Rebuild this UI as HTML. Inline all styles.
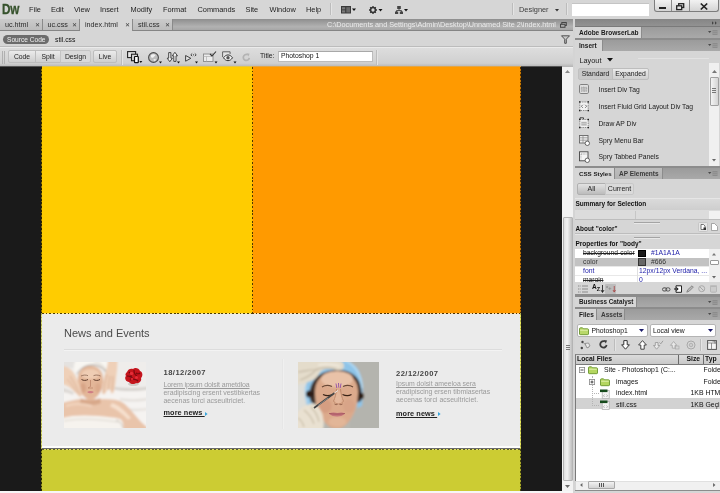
<!DOCTYPE html>
<html><head><meta charset="utf-8">
<style>
*{box-sizing:border-box;margin:0;padding:0}
html,body{width:720px;height:493px;overflow:hidden;background:#d6d6d6;font-family:"Liberation Sans",sans-serif;font-size:7px;color:#111}
.a{position:absolute}
.t{position:absolute;white-space:nowrap;line-height:1;font-size:7px}
.b{font-weight:bold}
svg{position:absolute;overflow:visible}
/* menu */
#menubar{left:0;top:0;width:720px;height:19px;background:#d6d6d6}
#menubar .m{font-size:7.400px;top:5.600px;color:#1c1c1c}
.sep{position:absolute;width:1px;background:#bcbcbc;border-right:1px solid #e4e4e4;width:2px}
/* doc tabs */
#tabbar{left:0;top:19px;width:573px;height:12px;background:linear-gradient(#8e8e8e,#b2b2b2 70%,#a6a6a6);border-bottom:1px solid #858585}
.tab{position:absolute;top:0;height:11px;background:linear-gradient(#cbcbcb,#bcbcbc);border-right:1px solid #8a8a8a;font-size:7.2px;line-height:12px;padding-left:5px;color:#2a2a2a;white-space:nowrap}
.tab.act{background:#d6d6d6;height:12px}
.tab i{position:absolute;right:2.500px;top:-.3px;font-style:normal;font-size:6.300px;color:#3a3a3a}
#relbar{left:0;top:31px;width:573px;height:16px;background:#d6d6d6;border-bottom:1px solid #bcbcbc}
#toolbar{left:0;top:47px;width:573px;height:20px;background:linear-gradient(#dddddd,#d0d0d0 80%,#b4b4b4);border-top:1px solid #ebebeb}
.btn{position:absolute;top:2.300px;height:12.700px;border:1px solid #bdbdbd;border-radius:2px;background:linear-gradient(#ebebeb,#cfcfcf);font-size:6.8px;line-height:11px;text-align:center;color:#222}
/* canvas */
#canvas{left:0;top:67px;width:562px;height:424px;background:#1a1a1a;overflow:hidden}
#vscroll{left:562px;top:67px;width:11px;height:424px;background:#f2f2f2}
.news{color:#9a9a9a;font-size:6.9px}
/* right */
#right{left:573px;top:19px;width:147px;height:474px;background:#d6d6d6;border-left:2px solid #8c8c8c;border-image:linear-gradient(90deg,#d4d4d4 0 40%,#858585 40% 100%) 1}
.ph{position:absolute;left:575px;width:145px;height:11px;background:linear-gradient(#9b9b9b,#a9a9a9)}
.pt{position:absolute;top:0;left:0;height:11px;background:#d6d6d6;font-weight:bold;font-size:6.500px;line-height:11px;padding-left:4px;border-right:1px solid #8c8c8c;color:#1c1c1c;white-space:nowrap}
.pt.in{background:linear-gradient(#bdbdbd,#b2b2b2);color:#3a3a3a}
.pm{position:absolute;right:2px;top:3px;width:10px;height:6px}
.dl{position:absolute;left:575px;width:145px;height:2px;background:#8c8c8c}
.row{font-size:6.75px;color:#1a1a1a}
</style></head><body><div id="root" style="position:absolute;left:0;top:0;width:720px;height:493px;will-change:transform">

<div id="menubar" class="a">
 <div class="t b" style="left:2.300px;top:.6px;font-size:15px;color:#36522c;-webkit-text-stroke:.35px #36522c;transform:scaleX(.78);transform-origin:0 0;letter-spacing:-.3px">Dw</div>
 <div class="t m" style="left:29px">File</div>
 <div class="t m" style="left:51px">Edit</div>
 <div class="t m" style="left:74px">View</div>
 <div class="t m" style="left:100px">Insert</div>
 <div class="t m" style="left:130.5px">Modify</div>
 <div class="t m" style="left:163px">Format</div>
 <div class="t m" style="left:197.5px">Commands</div>
 <div class="t m" style="left:245.500px">Site</div>
 <div class="t m" style="left:269.500px">Window</div>
 <div class="t m" style="left:306px">Help</div>
 <div class="sep" style="left:330px;top:3px;height:12px"></div>
 <!-- layout icon -->
 <svg style="left:341px;top:6px" width="16" height="8" viewBox="0 0 16 8"><rect x="0" y="0" width="10" height="7.5" fill="#3a3a3a"/><rect x="1" y="1.2" width="3.2" height="2.2" fill="#7a7a7a"/><rect x="1" y="4.3" width="3.2" height="2.2" fill="#7a7a7a"/><rect x="5.3" y="1.2" width="3.7" height="5.3" fill="#6a6a6a"/><path d="M11 2.5h4l-2 2.6z" fill="#111"/></svg>
 <!-- gear -->
 <svg style="left:368.5px;top:5.5px" width="16" height="9" viewBox="0 0 16 9"><circle cx="4" cy="4" r="2.4" fill="none" stroke="#333" stroke-width="1.5"/><g stroke="#333" stroke-width="1.3"><path d="M4 0v1.4M4 6.6V8M0 4h1.4M6.600 4H8M1.200 1.200l1 1M5.800 5.800l1 1M1.200 6.800l1-1M5.800 2.200l1-1"/></g><path d="M9.500 3h4l-2 2.600z" fill="#111"/></svg>
 <!-- site -->
 <svg style="left:395px;top:5.500px" width="16" height="9" viewBox="0 0 16 9"><rect x="2.200" y="0" width="3.600" height="3" fill="#444"/><path d="M4 3v1.500M1.500 6V4.500h5V6" stroke="#444" stroke-width=".9" fill="none"/><rect x="0" y="5.500" width="3.200" height="2.500" fill="#444"/><rect x="4.800" y="5.500" width="3.200" height="2.500" fill="#444"/><path d="M9 3h4l-2 2.600z" fill="#111"/></svg>
 <div class="sep" style="left:512px;top:3px;height:12px"></div>
 <div class="t m" style="left:519px;color:#3c3c3c">Designer</div>
 <svg style="left:555px;top:9px" width="4" height="3" viewBox="0 0 4 3"><path d="M0 0h4L2 2.500z" fill="#333"/></svg>
 <div class="sep" style="left:566px;top:3px;height:12px"></div>
 <div class="a" style="left:572px;top:3px;width:77px;height:12.500px;background:#fff;border-top:1px solid #c4c4c4"></div>
 <!-- window buttons -->
 <div class="a" style="left:654px;top:0;width:65px;height:12px;border:1px solid #7d7d7d;border-top:none;border-radius:0 0 3px 3px;background:linear-gradient(#f2f2f2,#d4d4d4)"></div>
 <div class="a" style="left:671px;top:0;width:1px;height:11px;background:#8a8a8a"></div>
 <div class="a" style="left:689px;top:0;width:1px;height:11px;background:#8a8a8a"></div>
 <div class="a" style="left:659px;top:7px;width:7px;height:2px;background:#222"></div>
 <svg style="left:676px;top:2.500px" width="9" height="8" viewBox="0 0 9 8"><rect x="2.700" y=".7" width="5" height="3.800" fill="none" stroke="#222" stroke-width="1.300"/><rect x=".7" y="2.800" width="5" height="3.800" fill="#e4e4e4" stroke="#222" stroke-width="1.300"/></svg>
 <svg style="left:700px;top:2.500px" width="8" height="7" viewBox="0 0 8 7"><path d="M.8.500l6.400 6M7.200.500l-6.400 6" stroke="#222" stroke-width="1.700"/></svg>
</div>

<div id="tabbar" class="a">
 <div class="tab" style="left:0;width:43px">uc.html<i>✕</i></div>
 <div class="tab" style="left:43px;width:37px;padding-left:4.500px">uc.css<i>✕</i></div>
 <div class="tab act" style="left:80px;width:53px">index.html<i>✕</i></div>
 <div class="tab" style="left:133px;width:40px">stil.css<i>✕</i></div>
 <div class="t" style="left:327px;top:2px;font-size:7.270px;color:#ececec">C:\Documents and Settings\Admin\Desktop\Unnamed Site 2\index.html</div>
 <svg style="left:560px;top:3px" width="7" height="6" viewBox="0 0 7 6"><rect x="1.800" y=".5" width="4.500" height="3" fill="none" stroke="#444" stroke-width="1"/><rect x=".5" y="2.300" width="4.500" height="3" fill="#aaa" stroke="#444" stroke-width="1"/></svg>
</div>

<div id="relbar" class="a">
 <div class="a" style="left:3px;top:4px;width:46px;height:9px;border-radius:5px;background:#6c6c6c"></div>
 <div class="t" style="left:7px;top:5.700px;font-size:6.600px;color:#f0f0f0">Source Code</div>
 <div class="t" style="left:55px;top:5.800px;font-size:6.800px;color:#111">stil.css</div>
 <!-- funnel -->
 <svg style="left:561px;top:4px" width="9" height="9" viewBox="0 0 9 9"><path d="M.5.800h8L5.300 4.200V8.300H3.700V4.200z" fill="#c8c8c8" stroke="#444" stroke-width=".9"/></svg>
</div>
<div id="toolbar" class="a">
 <div class="a" style="left:2px;top:3px;width:1px;height:13px;background:#b0b0b0"></div>
 <div class="a" style="left:4px;top:3px;width:1px;height:13px;background:#b0b0b0"></div>
 <div class="btn" style="left:8px;width:28px;border-radius:2px 0 0 2px">Code</div>
 <div class="btn" style="left:35px;width:26px;border-radius:0">Split</div>
 <div class="btn" style="left:60px;width:31px;background:#d9d9d9;border-radius:0 2px 2px 0;border-color:#c4c4c4">Design</div>
 <div class="btn" style="left:93px;width:24px">Live</div>
 <div class="sep" style="left:121px;top:2px;height:15px"></div>
 <!-- multiscreen -->
 <svg style="left:127px;top:3px" width="16" height="13" viewBox="0 0 16 13"><rect x=".6" y=".6" width="8" height="6" fill="#e8e8e8" stroke="#222" stroke-width="1.100"/><rect x="4.500" y="3.200" width="6" height="6.500" fill="#d8d8d8" stroke="#222" stroke-width="1.100"/><rect x="7.500" y="5.500" width="3.800" height="6.200" rx=".6" fill="#fff" stroke="#111" stroke-width="1.200"/><path d="M12.300 10h3l-1.500 2z" fill="#111"/></svg>
 <!-- globe -->
 <svg style="left:148px;top:3.500px" width="14" height="12" viewBox="0 0 14 12"><circle cx="5.500" cy="5.500" r="4.900" fill="#bdbdbd" stroke="#4a4a4a" stroke-width="1.100"/><path d="M3 3.200c1.500-1.500 3.500-1 4.500-.2-.5 1.300-1.500 1.200-2 2.300-.5 1-1.800.5-2.500-.4z" fill="#f2f2f2"/><path d="M5.500 7.200c1-.5 2.300-.3 2.500.6-.3 1-1.300 1.500-2 1.400z" fill="#e8e8e8"/><path d="M11 9.500h3l-1.500 2z" fill="#111"/></svg>
 <!-- file transfer arrows -->
 <svg style="left:167px;top:4px" width="13" height="12" viewBox="0 0 13 12"><path d="M1.700.600h2.200v5.600h1.500L2.800 9.700.2 6.200h1.500z" fill="#f4f4f4" stroke="#333" stroke-width=".9"/><path d="M6.800 9.400H9V3.800h1.500L7.900.3 5.300 3.800h1.500z" fill="#f4f4f4" stroke="#333" stroke-width=".9"/><path d="M10 9.400h3l-1.500 2z" fill="#111"/></svg>
 <!-- live code -->
 <svg style="left:185px;top:4px" width="14" height="12" viewBox="0 0 14 12"><path d="M.6 3.500l5.200 2.800L.6 9.200z" fill="#e2e2e2" stroke="#333" stroke-width=".9"/><path d="M7.200 1.500L5.800 2.800l1.400 1.300M9.800 1.500l1.400 1.300-1.400 1.300" stroke="#333" stroke-width=".9" fill="none"/><circle cx="8.500" cy="2.800" r=".6" fill="#333"/><path d="M10 9.400h3l-1.500 2z" fill="#111"/></svg>
 <!-- check browser -->
 <svg style="left:203px;top:3px" width="15" height="13" viewBox="0 0 15 13"><rect x=".5" y="3" width="9.500" height="7.500" fill="#ececec" stroke="#8a8a8a" stroke-width=".9"/><path d="M.5 5.500h9.500M3.500 5.500v5" stroke="#b0b0b0" stroke-width=".7"/><path d="M7 3l2 2 4-4.500" stroke="#333" stroke-width="1.100" fill="none"/><path d="M11.500 10.400h3l-1.500 2z" fill="#111"/></svg>
 <!-- visual aids eye -->
 <svg style="left:222px;top:3px" width="15" height="13" viewBox="0 0 15 13"><path d="M.6 6V.800h7.500V3" stroke="#555" stroke-width=".9" fill="#e4e4e4"/><path d="M1.500 6.800c2.500-3.800 6.500-3.800 9 0-2.500 3.800-6.500 3.800-9 0z" fill="#f4f4f4" stroke="#333" stroke-width="1"/><circle cx="6" cy="6.800" r="1.700" fill="#555"/><path d="M11.500 10.400h3l-1.500 2z" fill="#111"/></svg>
 <!-- refresh grey -->
 <svg style="left:241.500px;top:4.500px" width="9" height="9" viewBox="0 0 9 9"><path d="M7.300 4.800A3 3 0 1 1 5.500 1.700" fill="none" stroke="#b3b3b3" stroke-width="1.700"/><path d="M4.600.2l3 .6-1.300 2.600z" fill="#b3b3b3"/></svg>
 <div class="t" style="left:260px;top:5.300px;font-size:6.800px;color:#222">Title:</div>
 <div class="a" style="left:278px;top:2.500px;width:95px;height:11.500px;background:#fff;border:1px solid #bcbcbc;border-top-color:#a8a8a8"></div>
 <div class="sep" style="left:376px;top:2px;height:15px"></div>
 <div class="t" style="left:281px;top:4.800px;font-size:6.800px;color:#111">Photoshop 1</div>
</div>

<div class="a" style="left:0;top:66px;width:562px;height:1px;opacity:.62;background:linear-gradient(90deg,#1a1a1a 0 42px,#ffcc00 42px 252px,#ff9a00 252px 521px,#1a1a1a 521px 562px)"></div>
<div id="canvas" class="a">
 <!-- coords inside canvas: y = page y - 67 -->
 <div class="a" style="left:42px;top:0;width:210px;height:247px;background:#ffcc00"></div>
 <div class="a" style="left:252px;top:0;width:269px;height:247px;background:#ff9a00"></div>
 <div class="a" style="left:252px;top:0;width:1px;height:246px;background:repeating-linear-gradient(180deg,#4d3800 0 1.830px,#ffb000 1.830px 3.660px)"></div>
 <div class="a" style="left:42px;top:247px;width:479px;height:134px;background:#ebebeb"></div>
 <div class="a" style="left:42px;top:246px;width:210px;height:1px;background:repeating-linear-gradient(90deg,#4d3c00 0 1.830px,#ffe88c 1.830px 3.660px)"></div>
 <div class="a" style="left:252px;top:246px;width:269px;height:1px;background:repeating-linear-gradient(90deg,#4d3000 0 1.830px,#ffdca0 1.830px 3.660px)"></div>
 <div class="a" style="left:42px;top:379px;width:479px;height:1.500px;background:#fcfcfc"></div>
 <div class="a" style="left:42px;top:380.500px;width:479px;height:1.500px;background:#6a6a6a"></div>
 <div class="a" style="left:42px;top:383px;width:479px;height:41px;background:#cccc33"></div>
 <div class="a" style="left:42px;top:382px;width:479px;height:1px;background:repeating-linear-gradient(90deg,#5a5a2a 0 1.830px,#e0e060 1.830px 3.660px)"></div>
 <div class="a" style="left:41px;top:0;width:1px;height:246px;background:repeating-linear-gradient(180deg,#2a2200 0 1.830px,#8a7000 1.830px 3.660px)"></div>
 <div class="a" style="left:41px;top:246px;width:1px;height:136px;background:repeating-linear-gradient(180deg,#b4b450 0 1.830px,#dcdc78 1.830px 3.660px)"></div>
 <div class="a" style="left:41px;top:382px;width:1px;height:42px;background:repeating-linear-gradient(180deg,#2a2a00 0 1.830px,#8a8a20 1.830px 3.660px)"></div>
 <div class="a" style="left:520px;top:0;width:1px;height:246px;background:repeating-linear-gradient(180deg,#5a3400 0 1.830px,#c87800 1.830px 3.660px)"></div>
 <div class="a" style="left:520px;top:246px;width:1px;height:136px;background:repeating-linear-gradient(180deg,#b4b450 0 1.830px,#e6e65a 1.830px 3.660px)"></div>
 <div class="a" style="left:520px;top:382px;width:1px;height:42px;background:repeating-linear-gradient(180deg,#4a4a10 0 1.830px,#a8a828 1.830px 3.660px)"></div>

 <div class="t" style="left:64px;top:261px;font-size:11px;color:#4a4a4a">News and Events</div>
 <div class="a" style="left:64px;top:281.500px;width:438px;height:2px;background:#dcdcdc;border-bottom:1px solid #f3f3f3"></div>
 <div class="a" style="left:282px;top:292px;height:70px;background:#e6e6e6;border-right:1px solid #f0f0f0;width:2px"></div>

 <!-- IMG1 -->
 <svg id="img1" style="left:64px;top:295px;overflow:hidden" width="82" height="66" viewBox="0 0 82 66">
 <defs><filter id="b1" x="-10%" y="-10%" width="120%" height="120%"><feGaussianBlur stdDeviation=".8"/></filter><filter id="b2"><feGaussianBlur stdDeviation=".45"/></filter>
 <clipPath id="c1"><rect width="82" height="66"/></clipPath></defs>
 <g clip-path="url(#c1)">
 <rect width="82" height="66" fill="#efedeb"/>
 <g filter="url(#b1)">
  <rect x="-2" y="-2" width="16" height="8" fill="#e4e2e0"/>
  <!-- sheet -->
  <path d="M-2 28h90v40H-2z" fill="#f5f3f1"/>
  <path d="M50 25c10 1.500 22 1.500 34 0v2.500c-12 2-24 2-34 0z" fill="#d6d2ce"/>
  <path d="M56 36c8 1.500 18 1.500 28 0v2c-10 2-20 2-28 0z" fill="#e4e0dc"/>
  <path d="M60 46c8 1 16 1 24 0v2c-8 1.500-16 1.500-24 0z" fill="#e6e2de"/>
  <path d="M-2 26c4 1 8 2 12 4l-1 3c-4-2-8-3-11-3z" fill="#dcd8d4"/>
  <!-- towel on head -->
  <path d="M11 12C9 6 10 1 12 -2h34c1 4 0 9-3 13-4-6-10-8-16-8-7 0-12 3-16 9z" fill="#f8f6f2"/>
  <path d="M13 12c4-7 10-9 16-9 5 0 10 2 13 7" stroke="#5a4438" stroke-width=".9" fill="none" opacity=".7"/>
  <path d="M30 -1c6 2 10 5 12 9" stroke="#d4cec4" stroke-width="1" fill="none"/>
  <!-- shoulders / chest -->
  <path d="M-2 41c6-2 12-3 18-4h20c6 0 14 0 20 2 6 3 10 8 15 14 4 5 8 9 13 13v4H-2z" fill="#e9c4aa"/>
  <path d="M17 36c4 3 14 3 19 0l1 5c-6 3-15 3-21 0z" fill="#d8a88a"/>
  <path d="M48 41c7 2 13 8 19 15l-3 1.500c-6-6-12-11-18-13z" fill="#f6e0ce"/>
  <path d="M2 44c8-3 18-2 26 0" stroke="#f2d6c0" stroke-width="2" fill="none"/>
  <!-- towel wrap -->
  <path d="M-2 56c10-3 24-3 36-2 8 1 16 1 22 3 3 2 4 6 3 11H-2z" fill="#f6f3ee"/>
  <path d="M0 59c14-3 34-2 54 1" stroke="#dcd6ce" stroke-width="1" fill="none"/>
  <path d="M52 58c3 1 6 3 7 8" stroke="#d0cac2" stroke-width="1.200" fill="none"/>
  <!-- face -->
  <path d="M14 18c0-9 5-14 12.500-14S39 9 39 18c0 7-2 12-5 15.500-2 2.500-5 4-7.500 4s-5.500-1.500-7.500-4c-3-3.500-5-8.500-5-15.500z" fill="#e3b698"/>
  <ellipse cx="26.500" cy="12" rx="9" ry="5" fill="#efcdb4"/>
  <ellipse cx="19" cy="26" rx="3" ry="5" fill="#d8a486"/>
  <ellipse cx="34" cy="26" rx="3" ry="5" fill="#dcaa8c"/>
  <!-- left arm & hand -->
  <path d="M-2 4c4 0 8 2 11 6 3 4 5 9 7 14 1 3 2 7 2 10l-2.500 1c-3-3-5-6-8-8-3-3-6-4-9.500-5z" fill="#efd0b8"/>
  <path d="M6 14c3 5 7 11 10 19M3 17c4 4 7 9 10 14" stroke="#d6aa8e" stroke-width=".9" fill="none"/>
  <!-- right arm & hand -->
  <path d="M44 -2h9.500c0 6-.5 12-1.500 18-.5 5-1 10-2.500 15l-2.500.5c-.5-3-1-5-2.500-5l-4 6-2.500-1c0-6 1-13 3-19 1.500-5 2.500-9 3-14.500z" fill="#efd0b8"/>
  <path d="M43 12c-2 7-3 13-3.500 19M46 14c-1 5-1.500 10-1.500 14M49 14c0 5-.5 10-1 15" stroke="#d6aa8e" stroke-width=".9" fill="none"/>
 </g>
 <g filter="url(#b2)">
  <path d="M17.500 17.500c2 1.200 4.500 1.200 6.500 0M29.500 17.500c2 1.200 4.500 1.200 6.500 0" stroke="#5a3a2a" stroke-width="1" fill="none"/>
  <path d="M17 14c2.500-1.200 5-1.200 7-.3M29.500 13.700c2-.9 4.500-.9 7 .3" stroke="#8a6450" stroke-width=".8" fill="none"/>
  <path d="M26.500 18v6.500c-1 .8-2 1-2.500 1.500h5" stroke="#c28c70" stroke-width=".9" fill="none"/>
  <path d="M23 30c2-1.200 5-1.200 7 0-2 1.800-5 1.800-7 0z" fill="#cf7c84"/>
  <!-- flower -->
  <ellipse cx="69.500" cy="22" rx="5.500" ry="2" fill="#d0ccc8"/>
  <path d="M63 10c1-3 4-4 6-3 2-2 6-1 7 2 3 1 3 5 1 7 1 3-2 6-5 5-2 2-6 1-7-1-3 0-5-4-3-6-1-1-.5-3 1-4z" fill="#c4121c"/>
  <path d="M65 10c2 2 3 4 2 7M70 8c0 3 1 5 3 6M66 18c3-1 6-1 8 1M63 14c3 0 5 1 6 3M72 11c1 1 3 1 4 0" stroke="#780810" stroke-width="1.100" fill="none"/>
  <circle cx="67.500" cy="11.500" r="1.700" fill="#e62e38"/><circle cx="72.500" cy="15.500" r="1.500" fill="#e62e38"/><circle cx="68" cy="17" r="1.200" fill="#dc2630"/>
 </g>
 </g>
</svg>
 <!-- IMG2 -->
 <svg id="img2" style="left:298px;top:295px;overflow:hidden" width="81" height="66" viewBox="0 0 81 66">
 <defs><clipPath id="c2"><rect width="81" height="66"/></clipPath></defs>
 <g clip-path="url(#c2)">
 <rect width="81" height="66" fill="#b7b7b1"/>
 <g filter="url(#b1)">
  <rect x="52" y="-2" width="32" height="70" fill="#b4b4ae"/>
  <rect x="-2" y="18" width="12" height="36" fill="#deded9"/>
  <!-- blue cap -->
  <path d="M9 44C5 30 8 12 20 3 28-3 48-4 57 4c8 7 9 24 7 40l-5 2c2-14 0-27-8-33-8-5-23-5-31 2-7 7-8 18-6 29z" fill="#8ec4e8"/>
  <path d="M46 -2c10 4 17 13 18 28" stroke="#b0d8f2" stroke-width="2" fill="none"/>
  <path d="M8 24c-1 6 0 12 2 18" stroke="#a8d2ee" stroke-width="2" fill="none"/>
  <!-- hair -->
  <path d="M13 40c-3-8-1-17 4-23 6-7 15-9 23-9 8 0 17 3 21 11 3 7 3 14 2 20l-5 2c0-10-2-17-8-21-8-4-19-4-26 1-6 5-7 12-6 21z" fill="#40302a"/>
  <circle cx="11.500" cy="32" r="3.600" fill="#2c1e18"/><circle cx="62.500" cy="34" r="3.400" fill="#2c1e18"/>
  <!-- face -->
  <path d="M17 30c0-13 9-20 21.500-20S60 17 60 30c0 9-2 17-5 23-4 8-10 14-16.500 14S26 61 22 53c-3-6-5-14-5-23z" fill="#dcaa8c"/>
  <ellipse cx="39" cy="17" rx="16" ry="8" fill="#e9c2a8"/>
  <ellipse cx="27.500" cy="44" rx="6" ry="7" fill="#d59e82"/>
  <ellipse cx="51" cy="44" rx="6" ry="7" fill="#d8a488"/>
  <ellipse cx="39.500" cy="60" rx="9" ry="5" fill="#e2b698"/>
  <ellipse cx="40" cy="36" rx="4" ry="7" fill="#e4b89c"/>
  <!-- glove top -->
  <path d="M-2 -2h42c4 1 6 3 6 6 0 3-3 5-8 4-5-1-9-2-13 0-3 1-4 4-6 7-4 4-11 6-21 8z" fill="#e4dccb"/>
  <path d="M16 8c6-2 14-3 22-1M0 10c8-1 14-3 20-2M2 18c6-2 11-5 15-9" stroke="#c4b8a4" stroke-width="1.100" fill="none"/>
  <path d="M20 3c6-1 14-1 22 1" stroke="#f2ece0" stroke-width="1.400" fill="none"/>
  <!-- glove bottom -->
  <path d="M-2 52c3-4 7-8 11-9 4-2 8-1 11 2 3 3 5 7 5 11 1 4 1 7 0 12H-2z" fill="#e9e1d1"/>
  <path d="M6 48c4 3 8 8 10 14M13 45c4 4 7 9 8 15M0 56c3 2 5 5 6 9" stroke="#c8bca6" stroke-width="1.100" fill="none"/>
 </g>
 <g filter="url(#b2)">
  <path d="M24 25c3-1.800 7-1.800 10-.5M45 24.500c3-1.300 7-1.300 10 .5" stroke="#6a4a38" stroke-width="1.300" fill="none"/>
  <path d="M25 32.500c3 1.400 6.500 1.400 9.500 0M44.500 32.500c3 1.400 6.500 1.400 9 0" stroke="#3a2418" stroke-width="1.200" fill="none"/>
  <path d="M38 21.500l.8 4.500M40.500 21l.2 4.500M43 21.500l-.8 4.500" stroke="#9a5aa8" stroke-width="1" fill="none"/>
  <path d="M38.500 27c-.5 5-1.500 9-3 12 1 2 3 3 5 3s4-1 5-3c-1.500-3-2.500-7-3-12" stroke="#c08a6c" stroke-width="1" fill="none"/>
  <path d="M36.500 42c1 .8 2 .8 3 .3M41.500 42.300c1 .5 2 .5 3-.3" stroke="#8a5a44" stroke-width="1" fill="none"/>
  <path d="M31 51.500c3-1.600 6-1 8.500-.6 2.500-.4 5-1 7.500.6-2.500 2.400-5 3-8 3s-5.500-.6-8-3z" fill="#c4747c"/>
  <path d="M31 51.500c5 .8 11 .8 16 0" stroke="#9a4a54" stroke-width=".7" fill="none"/>
  <path d="M16 46L36.500 31" stroke="#444" stroke-width="1.700"/>
  <path d="M36.500 31l3.500-2.600" stroke="#e8e8e8" stroke-width=".9"/>
  <path d="M20 43.500l10-7.500" stroke="#9a9a9a" stroke-width=".8"/>
 </g>
 </g>
</svg>

 <div class="t b" style="left:163.500px;top:302px;font-size:7.600px;color:#444;letter-spacing:.45px">18/12/2007</div>
 <div class="t news" style="left:163.500px;top:313.700px;text-decoration:underline;text-decoration-thickness:.7px;letter-spacing:-.13px;font-size:7px">Lorem ipsum dolsit ametdloa</div>
 <div class="t news" style="left:163.500px;top:321.700px;letter-spacing:-.047px;font-size:7px">eradipiscing ersent vestibkertas</div>
 <div class="t news" style="left:163.500px;top:329.700px;letter-spacing:-.03px;font-size:7px">aecenas torci acseultriciet.</div>
 <div class="t b" style="left:163.500px;top:342px;font-size:7.300px;color:#222;text-decoration:underline;letter-spacing:.1px">more news&nbsp;</div>
 <svg style="left:205px;top:344.500px" width="3" height="4" viewBox="0 0 3 4"><path d="M0 0l2.600 2L0 4z" fill="#3aa6dc"/></svg>

 <div class="t b" style="left:396px;top:302.500px;font-size:7.600px;color:#444;letter-spacing:.45px">22/12/2007</div>
 <div class="t news" style="left:396px;top:314.200px;text-decoration:underline;text-decoration-thickness:.7px;letter-spacing:-.02px">Ipsum dolsit ameeloa sera</div>
 <div class="t news" style="left:396px;top:322.200px;letter-spacing:-.03px">eradipiscing ersen tibmiasertas</div>
 <div class="t news" style="left:396px;top:330.200px;letter-spacing:.035px">aecenas torci acseultriciet.</div>
 <div class="t b" style="left:396px;top:342.500px;font-size:7.300px;color:#222;text-decoration:underline;letter-spacing:.1px">more news&nbsp;</div>
 <svg style="left:438px;top:345px" width="3" height="4" viewBox="0 0 3 4"><path d="M0 0l2.600 2L0 4z" fill="#3aa6dc"/></svg>
</div>
<div id="vscroll" class="a">
 <div class="a" style="left:1px;top:150px;width:10px;height:264px;background:linear-gradient(90deg,#e0e0e0,#f2f2f2 40%,#bebebe);border:1px solid #b4b4b4;border-radius:1px"></div>
 <svg style="left:3px;top:3.300px" width="5" height="3" viewBox="0 0 5 3"><path d="M0 3L2.500 0 5 3z" fill="#8a8a8a"/></svg>
 <svg style="left:3px;top:418px" width="5" height="3" viewBox="0 0 5 3"><path d="M0 0l2.500 3L5 0z" fill="#6a6a6a"/></svg>
 <div class="a" style="left:4px;top:278px;width:4px;height:1px;background:#777;box-shadow:0 2px 0 #777,0 4px 0 #777"></div>
</div>
<div class="a" style="left:0;top:491px;width:573px;height:2px;background:#f6f6f6"></div>
<div id="right" class="a"></div>
<!-- top strip -->
<div class="a" style="left:575px;top:19px;width:145px;height:7px;background:linear-gradient(#858585,#929292)"></div>
<svg style="left:712px;top:21px" width="6" height="4" viewBox="0 0 6 4"><path d="M0 .3l1.800 1.700L0 3.700zM3 .3l1.800 1.700L3 3.700z" fill="#444"/></svg>
<div class="a" style="left:575px;top:26px;width:145px;height:1px;background:#7a7a7a"></div>

<!-- BrowserLab -->
<div class="ph" style="top:27px"><div class="pt" style="width:67px">Adobe BrowserLab</div><svg class="pm" viewBox="0 0 10 6"><path d="M0 1h3.400L1.700 3z" fill="#4a4a4a"/><rect x="4.500" y="0" width="5" height="5" fill="#8c8c8c"/><path d="M4.500 1.700h5M4.500 3.400h5" stroke="#a4a4a4" stroke-width=".6"/></svg></div>
<div class="dl" style="top:38px"></div>

<!-- Insert -->
<div class="ph" style="top:40px"><div class="pt" style="width:28px">Insert</div><svg class="pm" viewBox="0 0 10 6"><path d="M0 1h3.400L1.700 3z" fill="#4a4a4a"/><rect x="4.500" y="0" width="5" height="5" fill="#8c8c8c"/><path d="M4.500 1.700h5M4.500 3.400h5" stroke="#a4a4a4" stroke-width=".6"/></svg></div>
<div class="t" style="left:579.500px;top:56.500px;font-size:7.300px;color:#222">Layout</div>
<svg style="left:606.500px;top:58px" width="6" height="4" viewBox="0 0 6 4"><path d="M0 0h6L3 3.500z" fill="#111"/></svg>
<div class="a" style="left:638px;top:58px;width:71px;height:1px;background:#e2e2e2"></div>
<div class="btn" style="left:578px;top:68px;width:35px;height:11.500px;line-height:10px;background:#c8c8c8;border-color:#c0c0c0;border-radius:2px 0 0 2px">Standard</div>
<div class="btn" style="left:612px;top:68px;width:37px;height:11.500px;line-height:10px;border-radius:0 2px 2px 0">Expanded</div>
<!-- insert scrollbar -->
<div class="a" style="left:709px;top:63px;width:10px;height:103px;background:#f0f0f0"></div>
<div class="a" style="left:709.500px;top:77px;width:9px;height:28.500px;background:linear-gradient(90deg,#f4f4f4,#d4d4d4);border:1px solid #a0a0a0;border-radius:1px"></div>
<div class="a" style="left:712px;top:88px;width:4px;height:1px;background:#777;box-shadow:0 2px 0 #777,0 4px 0 #777"></div>
<svg style="left:711.500px;top:69.500px" width="5" height="3" viewBox="0 0 5 3"><path d="M0 3L2.500 0 5 3z" fill="#777"/></svg>
<svg style="left:712px;top:158.500px" width="4" height="2.500" viewBox="0 0 5 3"><path d="M0 0l2.500 3L5 0z" fill="#666"/></svg>
<!-- rows -->
<svg style="left:579px;top:84px" width="10" height="10" viewBox="0 0 10 10"><rect x=".6" y=".6" width="8.800" height="8.800" rx="1" fill="#ececec" stroke="#777" stroke-width="1"/><path d="M2.300 3h5.400v4.300H2.300z" fill="#c4c4c4" stroke="#888" stroke-width=".7" stroke-dasharray="1 .6"/><path d="M5 3v4.300" stroke="#999" stroke-width=".5"/></svg>
<div class="t row" style="left:598.500px;top:86.600px">Insert Div Tag</div>
<svg style="left:579px;top:101px" width="10" height="11" viewBox="0 0 10 11"><rect x=".8" y="1" width="8.400" height="8.500" fill="#f2f2f2" stroke="#666" stroke-width=".7" stroke-dasharray="1.400 .9"/><path d="M3.800 3.800L2.300 5.300l1.500 1.500M6.200 3.800l1.500 1.500-1.500 1.500" stroke="#555" stroke-width=".8" fill="none"/><rect x="0" y=".2" width="1.400" height="1.400" fill="#222"/><rect x="8.600" y=".2" width="1.400" height="1.400" fill="#222"/><rect x="0" y="8.900" width="1.400" height="1.400" fill="#222"/><rect x="8.600" y="8.900" width="1.400" height="1.400" fill="#222"/></svg>
<div class="t row" style="left:598.500px;top:103.600px">Insert Fluid Grid Layout Div Tag</div>
<svg style="left:579px;top:117px" width="10" height="12" viewBox="0 0 10 12"><path d="M1 2.500V.8h3.500v1.700" fill="#ddd" stroke="#333" stroke-width=".9"/><rect x=".8" y="2.500" width="8.400" height="8" fill="#f2f2f2" stroke="#666" stroke-width=".7" stroke-dasharray="1.400 .9"/><rect x="2.300" y="4.800" width="5.400" height="3.800" fill="#b4b4b4"/><path d="M2.300 6.700h5.400" stroke="#e8e8e8" stroke-width=".5"/><rect x="0" y="1.800" width="1.400" height="1.400" fill="#222"/><rect x="8.600" y="1.800" width="1.400" height="1.400" fill="#222"/><rect x="0" y="9.900" width="1.400" height="1.400" fill="#222"/><rect x="8.600" y="9.900" width="1.400" height="1.400" fill="#222"/></svg>
<div class="t row" style="left:598.500px;top:120.500px">Draw AP Div</div>
<svg style="left:578.500px;top:135px" width="11" height="11" viewBox="0 0 11 11"><rect x=".5" y=".5" width="8.500" height="7.500" fill="#eee" stroke="#666" stroke-width=".9"/><path d="M.5 2.800H9M.5 5.200H9M4 .5V8" stroke="#888" stroke-width=".7"/><circle cx="8.300" cy="8.300" r="2.200" fill="#fff" stroke="#555" stroke-width=".9"/></svg>
<div class="t row" style="left:598.500px;top:137.500px">Spry Menu Bar</div>
<svg style="left:578.500px;top:151px" width="11" height="12" viewBox="0 0 11 12"><rect x=".5" y=".8" width="8.500" height="9" fill="#f4f4f4" stroke="#444" stroke-width=".9"/><path d="M2 3h5.500" stroke="#888" stroke-width=".8" stroke-dasharray="1 .7"/><path d="M2 3v5.500" stroke="#999" stroke-width=".7" stroke-dasharray="1 .7"/><circle cx="8.300" cy="9.300" r="2.200" fill="#fff" stroke="#555" stroke-width=".9"/></svg>
<div class="t row" style="left:598.500px;top:154px">Spry Tabbed Panels</div>
<div class="dl" style="top:166px"></div>

<!-- CSS Styles -->
<div class="ph" style="top:168px"><div class="pt" style="width:40px;font-size:6.200px">CSS Styles</div><div class="pt in" style="left:40px;width:48px">AP Elements</div><svg class="pm" viewBox="0 0 10 6"><path d="M0 1h3.400L1.700 3z" fill="#4a4a4a"/><rect x="4.500" y="0" width="5" height="5" fill="#8c8c8c"/><path d="M4.500 1.700h5M4.500 3.400h5" stroke="#a4a4a4" stroke-width=".6"/></svg></div>
<div class="btn" style="left:577px;top:182.500px;width:29px;height:12px;line-height:10px;background:linear-gradient(#e2e2e2,#bcbcbc);border-color:#b0b0b0;border-radius:2px 0 0 2px;font-size:7px">All</div>
<div class="btn" style="left:605px;top:182.500px;width:29px;height:12px;line-height:10px;background:#dadada;border-color:#c8c8c8;border-radius:0 2px 2px 0;font-size:7px">Current</div>
<div class="a" style="left:575px;top:198px;width:145px;height:12px;background:linear-gradient(#dadada,#cecece);border-top:1px solid #e6e6e6"></div>
<div class="t b" style="left:575.500px;top:200.500px;font-size:6.500px;color:#111">Summary for Selection</div>
<div class="a" style="left:575px;top:210px;width:145px;height:9px;background:#dcdcdc"></div>
<div class="a" style="left:635px;top:211px;width:1px;height:8px;background:#c6c6c6"></div>
<div class="a" style="left:709px;top:211px;width:11px;height:8px;background:#f2f2f2"></div>
<div class="a" style="left:575px;top:219px;width:145px;height:1px;background:#bdbdbd"></div>
<div class="a" style="left:634px;top:222px;width:26px;background:#a4a4a4;border-bottom:1px solid #e8e8e8;height:2px"></div>
<div class="t b" style="left:575.500px;top:225.500px;font-size:6.400px;color:#111">About "color"</div>
<svg style="left:698px;top:222px" width="10" height="10" viewBox="0 0 10 10"><rect x=".5" y=".5" width="9" height="9" rx="1" fill="#e6e6e6" stroke="#c0c0c0" stroke-width=".8"/><path d="M3 2.500h2.500L7 4v3.500H3z" fill="#fff" stroke="#444" stroke-width=".7"/><rect x="5.500" y="5.500" width="2.500" height="2.500" fill="#333"/></svg>
<svg style="left:711px;top:223px" width="7" height="8" viewBox="0 0 7 8"><path d="M.5.500h3l3 3v4h-6z" fill="#fff" stroke="#888" stroke-width=".7"/></svg>
<div class="a" style="left:575px;top:233px;width:145px;height:1px;background:#bdbdbd;border-bottom:1px solid #e4e4e4;height:2px"></div>
<div class="a" style="left:634px;top:237px;width:26px;height:2px;background:#a4a4a4;border-bottom:1px solid #e8e8e8"></div>
<div class="t b" style="left:575.500px;top:240.500px;font-size:6.500px;color:#111">Properties for "body"</div>
<!-- props list -->
<div class="a" style="left:575px;top:249px;width:134px;height:33px;background:#fff;overflow:hidden">
 <div class="a" style="left:0;top:8.500px;width:134px;height:8.500px;background:#c2c2c2"></div>
 <div class="a" style="left:0;top:17px;width:134px;height:1px;background:#e8e8e8"></div>
 <div class="a" style="left:0;top:26px;width:134px;height:1px;background:#e8e8e8"></div>
 <div class="a" style="left:62px;top:17px;width:1px;height:16px;background:#e0e0e0"></div>
 <div class="t" style="left:8px;top:1px;font-size:6.700px;color:#222;text-decoration:line-through">background-color</div>
 <div class="a" style="left:63px;top:.5px;width:7.500px;height:7.500px;background:#1a1a1a;border:1px solid #000"></div>
 <div class="t" style="left:76px;top:1px;font-size:6.800px;color:#1c1ca8">#1A1A1A</div>
 <div class="t" style="left:8px;top:9.500px;font-size:6.800px;color:#383838">color</div>
 <div class="a" style="left:63px;top:9px;width:7.500px;height:7.500px;background:#666;border:1px solid #333"></div>
 <div class="t" style="left:76px;top:9.500px;font-size:6.800px;color:#333">#666</div>
 <div class="t" style="left:8px;top:18.500px;font-size:6.800px;color:#1c1ca8">font</div>
 <div class="t" style="left:64px;top:18.500px;font-size:6.800px;color:#1c1ca8">12px/12px Verdana, ...</div>
 <div class="t" style="left:8px;top:27.800px;font-size:6.700px;color:#222;text-decoration:line-through">margin</div>
 <div class="t" style="left:64px;top:27.800px;font-size:6.800px;color:#1c1ca8">0</div>
</div>
<div class="a" style="left:709px;top:249px;width:11px;height:33px;background:#f0f0f0"></div>
<div class="a" style="left:709.500px;top:259.500px;width:9.500px;height:5px;background:#fff;border:1px solid #999;border-radius:1px"></div>
<svg style="left:712px;top:252.500px" width="4" height="2.500" viewBox="0 0 5 3"><path d="M0 3L2.500 0 5 3z" fill="#777"/></svg>
<svg style="left:712px;top:275.500px" width="4" height="2.500" viewBox="0 0 5 3"><path d="M0 0l2.500 3L5 0z" fill="#666"/></svg>
<!-- css bottom toolbar -->
<svg style="left:578px;top:284.500px" width="10" height="8" viewBox="0 0 10 8"><path d="M0 1h3M0 4h3M0 7h3" stroke="#8a8a8a" stroke-width="1.200" stroke-dasharray="1 .6"/><path d="M4 1h6M4 4h6M4 7h6" stroke="#8a8a8a" stroke-width="1.200"/></svg>
<div class="t b" style="left:592px;top:284px;font-size:6.500px;color:#111">A<span style="font-size:5.500px;position:relative;top:1.500px">Z</span></div>
<svg style="left:600.500px;top:285px" width="3" height="8" viewBox="0 0 3 8"><path d="M1.500 0v7M0 5l1.500 2.500L3 5" stroke="#111" stroke-width=".8" fill="none"/></svg>
<div class="a" style="left:605px;top:283.500px;width:11px;height:10px;background:#bcbcbc;border-radius:1px"></div>
<div class="t b" style="left:606px;top:285.500px;font-size:5.500px;color:#888">*+</div>
<svg style="left:613px;top:285.500px" width="2.500" height="6.500" viewBox="0 0 3 8"><path d="M1.500 0v7M0 5l1.500 2.500L3 5" stroke="#a84040" stroke-width="1" fill="none"/></svg>
<svg style="left:662px;top:286.500px" width="8.500" height="5" viewBox="0 0 10 6"><rect x=".5" y="1" width="5" height="3.800" rx="1.800" fill="none" stroke="#444" stroke-width="1.100"/><rect x="4.500" y="1" width="5" height="3.800" rx="1.800" fill="none" stroke="#444" stroke-width="1.100"/></svg>
<svg style="left:674px;top:284.500px" width="8" height="8" viewBox="0 0 8 8"><path d="M2 .800h5.500v6.500H2z" fill="#fff" stroke="#222" stroke-width="1"/><path d="M0 4h4M2.500 2.300L4.200 4 2.500 5.700" stroke="#111" stroke-width="1" fill="none"/></svg>
<svg style="left:686px;top:284.500px" width="8" height="8" viewBox="0 0 8 8"><path d="M.8 7.200l1-2.500L6 .8l1.300 1.300-4 4z" fill="#bbb" stroke="#777" stroke-width=".8"/></svg>
<svg style="left:697.500px;top:285px" width="8" height="8" viewBox="0 0 8 8"><circle cx="3.700" cy="3.700" r="3" fill="none" stroke="#a8a8a8" stroke-width="1"/><path d="M1.600 1.600l4.200 4.200" stroke="#a8a8a8" stroke-width="1"/></svg>
<svg style="left:710px;top:285px" width="7" height="8" viewBox="0 0 7 8"><rect x=".5" y="1.200" width="6" height="6" rx="1" fill="#ccc" stroke="#b0b0b0" stroke-width=".8"/><path d="M0 1h7" stroke="#b0b0b0" stroke-width="1"/></svg>
<div class="dl" style="top:294px;height:3px"></div>

<!-- Business Catalyst -->
<div class="ph" style="top:297px;height:10px"><div class="pt" style="width:62px;height:10px;line-height:10px;font-size:6.300px">Business Catalyst</div><svg class="pm" viewBox="0 0 10 6"><path d="M0 1h3.400L1.700 3z" fill="#4a4a4a"/><rect x="4.500" y="0" width="5" height="5" fill="#8c8c8c"/><path d="M4.500 1.700h5M4.500 3.400h5" stroke="#a4a4a4" stroke-width=".6"/></svg></div>
<div class="dl" style="top:307px"></div>
<!-- Files -->
<div class="ph" style="top:309px"><div class="pt" style="width:22px">Files</div><div class="pt in" style="left:22px;width:28px">Assets</div><svg class="pm" viewBox="0 0 10 6"><path d="M0 1h3.400L1.700 3z" fill="#4a4a4a"/><rect x="4.500" y="0" width="5" height="5" fill="#8c8c8c"/><path d="M4.500 1.700h5M4.500 3.400h5" stroke="#a4a4a4" stroke-width=".6"/></svg></div>
<div class="a" style="left:577px;top:324px;width:70.500px;height:13px;background:#fff;border:1px solid #b4b4b4;border-radius:2px"></div>
<svg style="left:579px;top:326.500px" width="10" height="8" viewBox="0 0 10 8"><path d="M.5 7V1.800Q.5.800 1.500.800h2l1 1H8.500q1 0 1 1V7q0 .7-1 .7h-7q-1 0-1-.7z" fill="#b9d86a" stroke="#5c8a1e" stroke-width=".8"/><path d="M1.200 3.200h7.600" stroke="#e6f4b8" stroke-width=".9"/></svg>
<div class="t" style="left:591.500px;top:328px;font-size:6.800px;color:#111">Photoshop1</div>
<svg style="left:639px;top:329px" width="5" height="3" viewBox="0 0 5 3"><path d="M0 0h5L2.500 3z" fill="#1a1a6a"/></svg>
<div class="a" style="left:650px;top:324px;width:66px;height:13px;background:#fff;border:1px solid #b4b4b4;border-radius:2px"></div>
<div class="t" style="left:653px;top:328px;font-size:6.800px;color:#111">Local view</div>
<svg style="left:708px;top:329px" width="5" height="3" viewBox="0 0 5 3"><path d="M0 0h5L2.500 3z" fill="#1a1a6a"/></svg>
<!-- files toolbar -->
<svg style="left:580px;top:339.500px" width="11" height="10" viewBox="0 0 11 10"><circle cx="2.500" cy="2" r="1.200" fill="#444"/><circle cx="1.800" cy="8" r="1.200" fill="#444"/><path d="M3.500 2.800l5 5" stroke="#888" stroke-width=".8"/><path d="M5 3.500l3.500-.5 1.500 3-3 2z" fill="#e8e8e8" stroke="#777" stroke-width=".7"/></svg>
<svg style="left:599px;top:340px" width="9" height="9" viewBox="0 0 9 9"><path d="M7.600 5A3.200 3.200 0 1 1 5.800 1.500" fill="none" stroke="#3a3a3a" stroke-width="1.800"/><path d="M4.800 0l3.300.5L6.800 3.500z" fill="#3a3a3a"/></svg>
<div class="sep" style="left:614px;top:339px;height:12px"></div>
<svg style="left:621px;top:340px" width="9" height="10" viewBox="0 0 9 10"><path d="M2.800.600h3.400v4.200h2.200L4.500 9.200.6 4.800h2.200z" fill="#fff" stroke="#333" stroke-width="1"/></svg>
<svg style="left:637.500px;top:340px" width="9" height="10" viewBox="0 0 9 10"><path d="M2.800 9.200h3.400V5h2.200L4.500.6.600 5h2.200z" fill="#fff" stroke="#444" stroke-width="1"/></svg>
<svg style="left:653px;top:339.500px" width="11" height="10" viewBox="0 0 11 10"><path d="M2.300 2.500h2.700v3h1.800L3.600 9.200.5 5.500h1.800z" fill="#e8e8e8" stroke="#9c9c9c" stroke-width=".9"/><path d="M6.500 2.500l1.300 1.300L10 .8" stroke="#9c9c9c" stroke-width="1" fill="none"/></svg>
<svg style="left:670px;top:340px" width="10" height="10" viewBox="0 0 10 10"><path d="M2.300 8.200h2.700V5.300h1.800L3.600 1.500.5 5.300h1.800z" fill="#e8e8e8" stroke="#a8a8a8" stroke-width=".9"/><rect x="5.500" y="6" width="3.500" height="3" fill="#d4d4d4" stroke="#a8a8a8" stroke-width=".7"/></svg>
<svg style="left:685.500px;top:340px" width="10" height="10" viewBox="0 0 10 10"><circle cx="5" cy="5" r="4" fill="#d8d8d8" stroke="#a8a8a8" stroke-width="1"/><circle cx="5" cy="5" r="1.800" fill="#cccccc" stroke="#a8a8a8" stroke-width=".8"/></svg>
<div class="sep" style="left:700px;top:339px;height:12px"></div>
<svg style="left:707px;top:340px" width="10" height="10" viewBox="0 0 10 10"><rect x=".6" y=".6" width="8.800" height="8.800" fill="#f4f4f4" stroke="#555" stroke-width="1"/><path d="M.6 3h8.800M4.500 3v6.400" stroke="#777" stroke-width=".8"/><path d="M5.500 1l2.500 0v2.500" stroke="#555" stroke-width=".7" fill="none"/></svg>
<!-- list header -->
<div class="a" style="left:575px;top:354px;width:145px;height:10.500px;background:linear-gradient(#dcdcdc,#c8c8c8);border-top:1px solid #8a8a8a;border-bottom:1px solid #7a7a7a;border-left:1px solid #7a7a7a"></div>
<div class="a" style="left:677.500px;top:355px;width:1px;height:9px;background:#6a6a6a"></div>
<div class="a" style="left:702.500px;top:355px;width:1px;height:9px;background:#6a6a6a"></div>
<div class="t b" style="left:577px;top:356px;font-size:6.800px;color:#111">Local Files</div>
<div class="t b" style="left:686.500px;top:356px;font-size:6.800px;color:#111">Size</div>
<div class="t b" style="left:705px;top:356px;font-size:6.800px;color:#111">Typ</div>
<!-- list body -->
<div class="a" style="left:575px;top:364.500px;width:145px;height:116px;background:#fff;border-left:1px solid #7a7a7a;overflow:hidden">
 <div class="a" style="left:0;top:33.500px;width:145px;height:11px;background:#d2d2d2"></div>
</div>
<!-- tree lines -->
<div class="a" style="left:591.500px;top:376px;width:0;height:28px;border-left:1px dotted #b4b4b4"></div>
<div class="a" style="left:592px;top:393px;width:7px;height:0;border-top:1px dotted #b4b4b4"></div>
<div class="a" style="left:592px;top:405px;width:7px;height:0;border-top:1px dotted #b4b4b4"></div>
<!-- row1 -->
<svg style="left:578.500px;top:367px" width="6" height="6" viewBox="0 0 6 6"><rect x=".4" y=".4" width="5.200" height="5.200" fill="#fff" stroke="#888" stroke-width=".8"/><path d="M1.500 3h3" stroke="#222" stroke-width=".8"/></svg>
<svg style="left:587.500px;top:366px" width="10" height="8" viewBox="0 0 10 8"><path d="M.5 7V1.800Q.5.800 1.500.800h2l1 1H8.500q1 0 1 1V7q0 .7-1 .7h-7q-1 0-1-.7z" fill="#b4d660" stroke="#5c8a1e" stroke-width=".8"/><path d="M1.200 3.200h7.600" stroke="#e6f4b8" stroke-width=".9"/></svg>
<div class="t" style="left:604px;top:367px;font-size:6.900px;color:#111">Site - Photoshop1 (C:...</div>
<div class="t" style="left:703.500px;top:367px;font-size:6.900px;color:#111">Folde</div>
<!-- row2 -->
<svg style="left:589px;top:379px" width="6" height="6" viewBox="0 0 6 6"><rect x=".4" y=".4" width="5.200" height="5.200" fill="#fff" stroke="#888" stroke-width=".8"/><path d="M1.500 3h3M3 1.500v3" stroke="#222" stroke-width=".8"/></svg>
<svg style="left:600px;top:378px" width="10" height="8" viewBox="0 0 10 8"><path d="M.5 7V1.800Q.5.800 1.500.800h2l1 1H8.500q1 0 1 1V7q0 .7-1 .7h-7q-1 0-1-.7z" fill="#b4d660" stroke="#5c8a1e" stroke-width=".8"/><path d="M1.200 3.200h7.600" stroke="#e6f4b8" stroke-width=".9"/></svg>
<div class="t" style="left:616px;top:378.800px;font-size:6.900px;color:#111">images</div>
<div class="t" style="left:703.500px;top:378.800px;font-size:6.900px;color:#111">Folde</div>
<!-- row3 -->
<svg style="left:600px;top:388.500px" width="10" height="10" viewBox="0 0 10 10"><rect x="2.200" y="1.500" width="7" height="8" fill="#f4f4f4" stroke="#aaa" stroke-width=".7"/><rect x="0" y=".5" width="7.500" height="2.600" fill="#164a1c"/><path d="M4.500 5.500L3.500 6.700l1 1.200M6.500 5.500l1 1.200-1 1.200" stroke="#888" stroke-width=".6" fill="none"/></svg>
<div class="t" style="left:616px;top:390px;font-size:6.900px;color:#111">index.html</div>
<div class="t" style="left:690.500px;top:390px;font-size:6.900px;color:#111">1KB HTM</div>
<!-- row4 -->
<svg style="left:600px;top:400px" width="10" height="10" viewBox="0 0 10 10"><rect x="2.200" y="1.500" width="7" height="8" fill="#f4f4f4" stroke="#aaa" stroke-width=".7"/><rect x="0" y=".5" width="7.500" height="2.600" fill="#164a1c"/><path d="M4.500 5.500L3.500 6.700l1 1.200M6.500 5.500l1 1.200-1 1.200" stroke="#888" stroke-width=".6" fill="none"/></svg>
<div class="t" style="left:616px;top:401.500px;font-size:6.900px;color:#111">stil.css</div>
<div class="t" style="left:690.500px;top:401.500px;font-size:6.900px;color:#111">1KB Geçi</div>
<!-- hscroll -->
<div class="a" style="left:576px;top:480.500px;width:144px;height:9px;background:#f0f0f0;border-top:1px solid #e0e0e0"></div>
<div class="a" style="left:587.500px;top:481px;width:27px;height:8px;background:linear-gradient(#f2f2f2,#d2d2d2);border:1px solid #a8a8a8;border-radius:1px"></div>
<div class="a" style="left:599px;top:483px;width:1px;height:4px;background:#555;box-shadow:2px 0 0 #555,4px 0 0 #555"></div>
<svg style="left:580px;top:483px" width="2.500" height="4" viewBox="0 0 3 5"><path d="M3 0L0 2.500 3 5z" fill="#666"/></svg>
<svg style="left:712.500px;top:483px" width="2.500" height="4" viewBox="0 0 3 5"><path d="M0 0l3 2.500L0 5z" fill="#666"/></svg>
<div class="a" style="left:575px;top:489.500px;width:145px;height:1.500px;background:#8c8c8c"></div>
</div></body></html>
